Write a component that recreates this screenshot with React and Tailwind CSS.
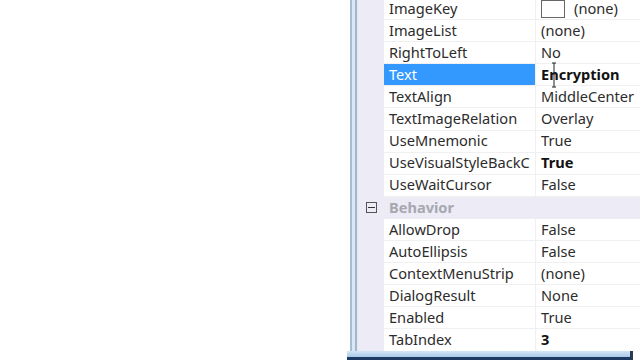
const rows = [
  { name: "ImageKey", value: "(none)", box: true },
  { name: "ImageList", value: "(none)" },
  { name: "RightToLeft", value: "No" },
  { name: "Text", value: "Encryption", bold: true, selected: true },
  { name: "TextAlign", value: "MiddleCenter" },
  { name: "TextImageRelation", value: "Overlay" },
  { name: "UseMnemonic", value: "True" },
  { name: "UseVisualStyleBackC", value: "True", bold: true },
  { name: "UseWaitCursor", value: "False" },
  { category: "Behavior" },
  { name: "AllowDrop", value: "False" },
  { name: "AutoEllipsis", value: "False" },
  { name: "ContextMenuStrip", value: "(none)" },
  { name: "DialogResult", value: "None" },
  { name: "Enabled", value: "True" },
  { name: "TabIndex", value: "3", bold: true },
];

function CategoryRow({ label }) {
  return (
    <div className="flex h-[22.1px] items-center bg-[#ecebf6]">
      <div className="flex w-[26px] justify-center pl-[1px]">
        <div className="flex h-[11px] w-[11px] items-center justify-center border border-[#555]">
          <div className="h-[1px] w-[7px] bg-[#333]" />
        </div>
      </div>
      <span className="pl-[5px] font-bold text-[#a7a7b0]">{label}</span>
    </div>
  );
}

function PropRow({ row }) {
  return (
    <div className="flex h-[22.1px]">
      <div className="w-[26px] bg-[#ecebf6]" />
      <div
        className={
          row.selected
            ? "flex w-[152px] items-center border-b border-r border-[#f0f0f0] bg-[#3399ff] pl-[5px] text-white"
            : "flex w-[152px] items-center border-b border-r border-[#f0f0f0] pl-[5px]"
        }
      >
        {row.name}
      </div>
      <div className="relative flex flex-1 items-center whitespace-nowrap border-b border-[#f0f0f0] pl-[5px]">
        {row.box && (
          <div className="mr-[9px] h-[18px] w-[24px] border border-[#666] bg-white" />
        )}
        <span className={row.bold ? "font-bold text-[#111]" : ""}>{row.value}</span>
        {row.selected && (
          <svg
            className="absolute left-[15px] top-[-2px]"
            width="8"
            height="26"
            viewBox="0 0 8 26"
          >
            <path d="M1 1h2M5 1h-2v24M1 25h2M5 25h-2M2 12h2" stroke="#222" strokeWidth="1" fill="none" />
          </svg>
        )}
      </div>
    </div>
  );
}

export default function App() {
  return (
    <div
      className="flex h-[360px] w-[640px] flex-col overflow-hidden bg-white text-[14.6px] text-[#2c2c2c]"
      style={{ fontFamily: '"Noto Sans", "Open Sans", sans-serif' }}
    >
      <div className="flex h-[351px]">
        <div className="w-[350px]" />
        <div className="w-[2px] bg-[#a9bdd2]" />
        <div className="w-[3px] bg-[#d8e8f6]" />
        <div className="w-[2px] bg-[#a3b6cb]" />
        <div className="w-[1px] bg-[#e4e8f4]" />
        <div className="flex-1 overflow-hidden">
          <div className="-mt-[2px]">
            {rows.map((r, i) =>
              r.category ? (
                <CategoryRow key={i} label={r.category} />
              ) : (
                <PropRow key={i} row={r} />
              )
            )}
          </div>
        </div>
      </div>
      <div className="flex h-[9px]">
        <div className="w-[347px]" />
        <div className="w-[283px] border-b-[3px] border-[#1d3a62] bg-gradient-to-b from-[#d4e6f6] to-[#a9c9e8]" />
        <div className="w-[3px] bg-[#2a3a50]" />
        <div className="flex-1" />
      </div>
    </div>
  );
}
